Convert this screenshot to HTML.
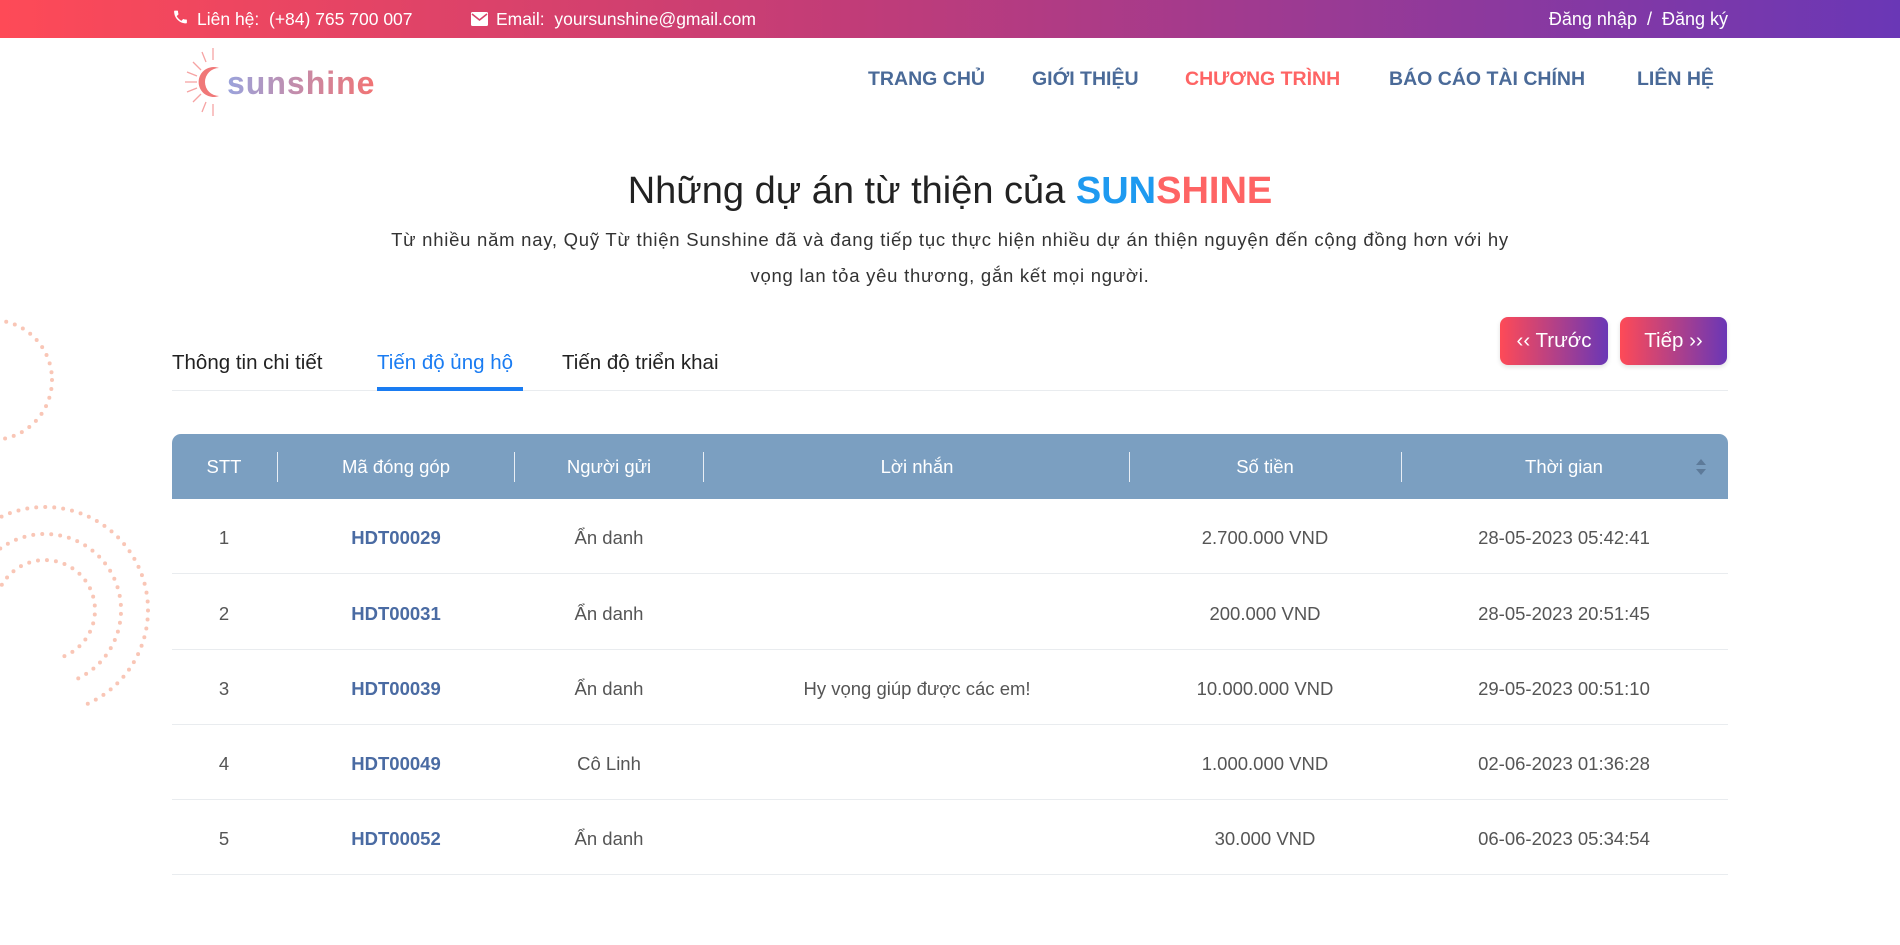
<!DOCTYPE html>
<html><head><meta charset="utf-8"><style>
*{margin:0;padding:0;box-sizing:border-box}
body{width:1900px;height:945px;overflow:hidden;background:#fff;font-family:"Liberation Sans",sans-serif;position:relative;color:#333}
.top{position:absolute;left:0;top:0;width:1900px;height:38px;background:linear-gradient(90deg,#fe4a57,#c13c78 45%,#6a37b6);color:#fff;font-size:17.5px}
.top span{position:absolute;top:9px}
.abs{position:absolute;white-space:nowrap}
.nav{top:68px;font-size:19.5px;font-weight:bold;color:#4a6a98}
.title{left:0;width:1900px;text-align:center;top:170px;font-size:38px;color:#222}
.p{left:300px;width:1300px;text-align:center;top:222px;font-size:18.5px;letter-spacing:.75px;line-height:36px;color:#333;white-space:nowrap}
.tab{top:351px;font-size:20.5px;color:#222}
.btn{position:absolute;top:317px;height:48px;border-radius:8px;background:linear-gradient(90deg,#fe4a57,#6a37b6);color:#fff;font-size:20.5px;text-align:center;line-height:48px;box-shadow:0 2px 5px rgba(0,0,0,.12)}
.thead{position:absolute;left:172px;top:434px;width:1556px;height:65px;background:#7b9fc1;border-radius:9px 9px 0 0}
.th{position:absolute;top:22px;color:#fff;font-size:18.5px;transform:translateX(-50%)}
.sep{position:absolute;top:18px;width:1px;height:30px;background:#e8eef5}
.row{position:absolute;left:172px;width:1556px;height:75px;border-bottom:1px solid #e9ecef}
.td{position:absolute;top:28px;font-size:18.5px;color:#555;transform:translateX(-50%);white-space:nowrap}
.code{color:#4a6ba3;font-weight:bold}
</style></head><body>
<div class="top">
<span style="left:172px;top:8px"><svg width="17" height="18" viewBox="0 0 24 24"><path fill="#fff" d="M6.6 10.8c1.4 2.8 3.8 5.1 6.6 6.6l2.2-2.2c.3-.3.7-.4 1-.2 1.1.4 2.3.6 3.6.6.6 0 1 .4 1 1V20c0 .6-.4 1-1 1C10.6 21 3 13.4 3 4c0-.6.4-1 1-1h3.5c.6 0 1 .4 1 1 0 1.3.2 2.5.6 3.6.1.3 0 .7-.2 1z"/></svg></span>
<span style="left:197px">Liên hệ:&nbsp; (+84) 765 700 007</span>
<span style="left:471px;top:10px"><svg width="17" height="14" viewBox="0 0 17 14"><rect x="0" y="0" width="17" height="14" rx="1.5" fill="#fff"/><path d="M1 2l7.5 6L16 2" stroke="#d9436a" stroke-width="1.6" fill="none"/></svg></span>
<span style="left:496px">Email:&nbsp; yoursunshine@gmail.com</span>
<span style="right:172px;font-size:18px">Đăng nhập&nbsp; /&nbsp; Đăng ký</span>
</div>
<svg class="abs" style="left:183px;top:46px" width="200" height="72" viewBox="0 0 200 72">
<g stroke="#f6a3a3" stroke-width="1.3">
<line x1="30" y1="2" x2="30" y2="14"/><line x1="30" y1="58" x2="30" y2="70"/><line x1="2" y1="36" x2="14" y2="36"/>
<line x1="10" y1="16" x2="18" y2="24"/><line x1="10" y1="56" x2="18" y2="48"/><line x1="19" y1="6" x2="23" y2="16"/><line x1="19" y1="66" x2="23" y2="56"/><line x1="4" y1="26" x2="14" y2="30"/><line x1="4" y1="46" x2="14" y2="42"/>
</g>
<path d="M36 22a15 15 0 1 0 0 28a12 12 0 1 1 0-28z" fill="#f07878"/>
<text x="44" y="48" font-family="Liberation Sans,sans-serif" font-size="32" font-weight="bold" fill="url(#lg)" letter-spacing="1">sunshine</text>
<defs><linearGradient id="lg" x1="0" x2="1"><stop offset="0" stop-color="#9aa3dc"/><stop offset="1" stop-color="#f27373"/></linearGradient></defs>
</svg>
<div class="abs nav" style="left:868px">TRANG CHỦ</div>
<div class="abs nav" style="left:1032px">GIỚI THIỆU</div>
<div class="abs nav" style="left:1185px;color:#fe6464">CHƯƠNG TRÌNH</div>
<div class="abs nav" style="left:1389px">BÁO CÁO TÀI CHÍNH</div>
<div class="abs nav" style="left:1637px">LIÊN HỆ</div>
<svg class="abs" style="left:0;top:310px" width="170" height="400">
<g fill="none" stroke="#f9c6b6" stroke-width="4" stroke-linecap="round" stroke-dasharray="0 9">
<circle cx="-8" cy="70" r="60"/>
<path d="M-51.8 264.8A103 103 0 1 1 80.2 396.8"/>
<path d="M-26.4 274A76 76 0 1 1 71 371.4"/>
<path d="M-2 282.9A50 50 0 1 1 62.1 347"/>
</g></svg>
<div class="abs title">Những dự án từ thiện của <b style="color:#1e9af0;font-weight:bold">SUN</b><b style="color:#fe6464">SHINE</b></div>
<div class="abs p">Từ nhiều năm nay, Quỹ Từ thiện Sunshine đã và đang tiếp tục thực hiện nhiều dự án thiện nguyện đến cộng đồng hơn với hy<br>vọng lan tỏa yêu thương, gắn kết mọi người.</div>
<div class="abs tab" style="left:172px">Thông tin chi tiết</div>
<div class="abs tab" style="left:377px;color:#1a7cf2">Tiến độ ủng hộ</div>
<div class="abs tab" style="left:562px">Tiến độ triển khai</div>
<div class="abs" style="left:172px;top:390px;width:1556px;height:1px;background:#e9ecef"></div>
<div class="abs" style="left:377px;top:387px;width:146px;height:4px;background:#1a7cf2"></div>
<div class="btn" style="left:1500px;width:108px">‹‹ Trước</div>
<div class="btn" style="left:1620px;width:107px">Tiếp ››</div>
<div class="thead">
<div class="th" style="left:52px">STT</div><div class="sep" style="left:105px"></div>
<div class="th" style="left:224px">Mã đóng góp</div><div class="sep" style="left:342px"></div>
<div class="th" style="left:437px">Người gửi</div><div class="sep" style="left:531px"></div>
<div class="th" style="left:745px">Lời nhắn</div><div class="sep" style="left:957px"></div>
<div class="th" style="left:1093px">Số tiền</div><div class="sep" style="left:1229px"></div>
<div class="th" style="left:1392px">Thời gian</div>
<svg style="position:absolute;left:1523px;top:25px" width="12" height="16"><path d="M6 0L11 6H1z M6 16L11 10H1z" fill="#5d7a99"/></svg>
</div>
<div class="row" style="top:499px"><div class="td" style="left:52px">1</div><div class="td code" style="left:224px">HDT00029</div><div class="td" style="left:437px">Ẩn danh</div><div class="td" style="left:1093px">2.700.000 VND</div><div class="td" style="left:1392px">28-05-2023 05:42:41</div></div>
<div class="row" style="top:575px"><div class="td" style="left:52px">2</div><div class="td code" style="left:224px">HDT00031</div><div class="td" style="left:437px">Ẩn danh</div><div class="td" style="left:1093px">200.000 VND</div><div class="td" style="left:1392px">28-05-2023 20:51:45</div></div>
<div class="row" style="top:650px"><div class="td" style="left:52px">3</div><div class="td code" style="left:224px">HDT00039</div><div class="td" style="left:437px">Ẩn danh</div><div class="td" style="left:745px">Hy vọng giúp được các em!</div><div class="td" style="left:1093px">10.000.000 VND</div><div class="td" style="left:1392px">29-05-2023 00:51:10</div></div>
<div class="row" style="top:725px"><div class="td" style="left:52px">4</div><div class="td code" style="left:224px">HDT00049</div><div class="td" style="left:437px">Cô Linh</div><div class="td" style="left:1093px">1.000.000 VND</div><div class="td" style="left:1392px">02-06-2023 01:36:28</div></div>
<div class="row" style="top:800px"><div class="td" style="left:52px">5</div><div class="td code" style="left:224px">HDT00052</div><div class="td" style="left:437px">Ẩn danh</div><div class="td" style="left:1093px">30.000 VND</div><div class="td" style="left:1392px">06-06-2023 05:34:54</div></div>
</body></html>
